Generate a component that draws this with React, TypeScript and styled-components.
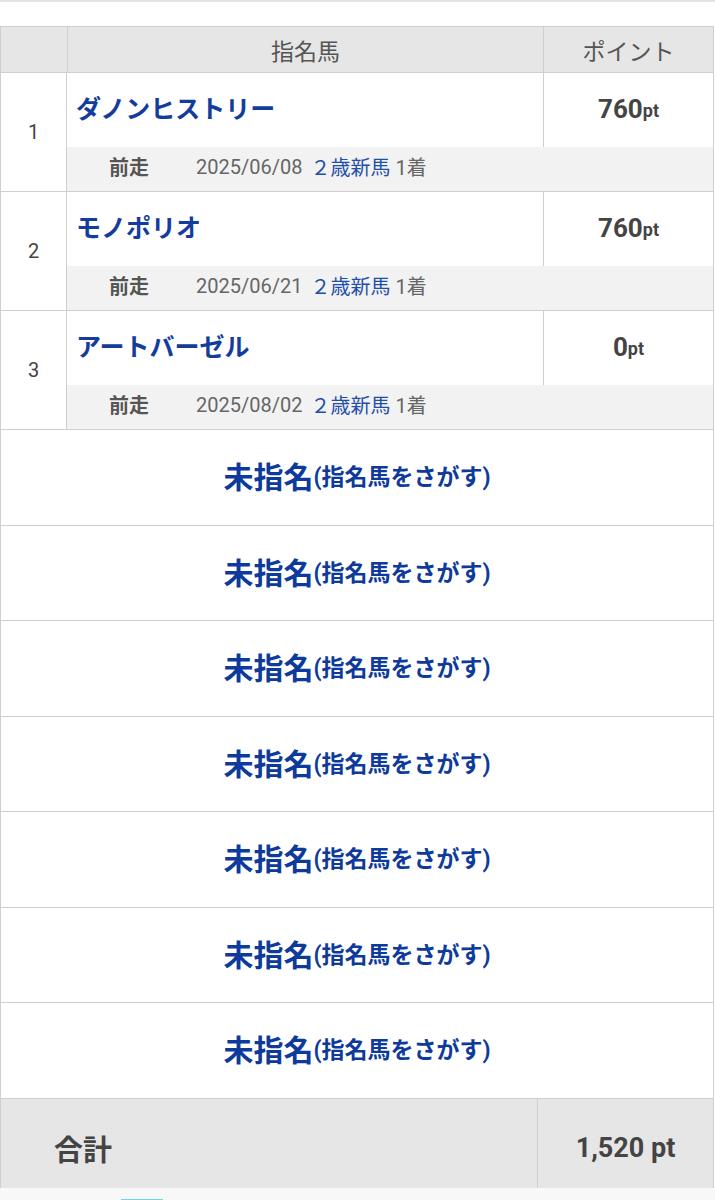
import React from "react";
import styled, { createGlobalStyle } from "styled-components";

const GlobalStyle = createGlobalStyle`
  html, body {
    margin: 0;
    padding: 0;
    background: #ffffff;
  }
  body {
    font-family: Roboto, "Noto Sans CJK JP", "Noto Sans", sans-serif;
    color: #444;
  }
  * { box-sizing: border-box; }
`;

const Page = styled.div`
  width: 715px;
  display: flex;
  flex-direction: column;
`;

const TopLine = styled.div`
  height: 2px;
  background: #e3e3e3;
  margin-bottom: 24px;
`;

const Table = styled.div`
  width: 714px;
  border: 1px solid #cfcfcf;
  border-bottom: none;
  display: flex;
  flex-direction: column;
`;

const HeaderRow = styled.div`
  display: grid;
  grid-template-columns: 66px 476px 1fr;
  height: 46px;
  background: #e6e6e6;
  border-bottom: 1px solid #cfcfcf;
`;

const HeaderCell = styled.div<{ $divider?: boolean }>`
  display: flex;
  align-items: center;
  justify-content: center;
  font-size: 23px;
  color: #555;
  font-weight: 400;
  border-left: ${(p) => (p.$divider ? "1px solid #cfcfcf" : "none")};
`;

const HorseRow = styled.div`
  display: grid;
  grid-template-columns: 66px 476px 1fr;
  grid-template-rows: 74px 44px;
  height: 119px;
  border-bottom: 1px solid #cfcfcf;
`;

const RankCell = styled.div`
  grid-row: 1 / span 2;
  display: flex;
  align-items: center;
  justify-content: center;
  font-size: 20px;
  color: #444;
  border-right: 1px solid #cfcfcf;
`;

const NameCell = styled.div`
  display: flex;
  align-items: center;
  padding-left: 9px;
  padding-bottom: 6px;
  font-size: 25px;
  font-weight: 700;
  color: #133c9c;
`;

const PointCell = styled.div`
  display: flex;
  align-items: center;
  justify-content: center;
  border-left: 1px solid #cfcfcf;
  font-weight: 700;
  color: #444;
  font-size: 26px;
  padding-bottom: 2px;
`;

const PtUnit = styled.span`
  font-size: 18px;
  padding-top: 3px;
`;

const SubCell = styled.div`
  grid-column: 2 / span 2;
  background: #f2f2f2;
  display: flex;
  align-items: center;
  padding-left: 42px;
  font-size: 20px;
  color: #666;
  padding-bottom: 5px;
`;

const SubLabel = styled.span`
  font-weight: 700;
  color: #555;
  margin-right: 47px;
`;

const RaceDate = styled.span`
  color: #666;
  margin-right: 8px;
`;

const RaceLink = styled.span`
  color: #1f4ea8;
  margin-right: 5px;
`;

const EmptyRow = styled.div`
  height: 95.5px;
  display: flex;
  align-items: center;
  justify-content: center;
  border-bottom: 1px solid #cfcfcf;
  background: #fff;
  color: #0d3a9b;
  font-weight: 700;
  padding-bottom: 4px;
`;

const EmptyMain = styled.span`
  font-size: 30px;
`;

const EmptySub = styled.span`
  font-size: 23px;
`;

const FooterRow = styled.div`
  width: 714px;
  display: grid;
  grid-template-columns: 536px 1fr;
  height: 89px;
  background: #e6e6e6;
  border-left: 1px solid #cfcfcf;
  border-right: 1px solid #cfcfcf;
`;

const FooterLabel = styled.div`
  display: flex;
  align-items: center;
  padding-left: 53px;
  font-size: 29px;
  font-weight: 700;
  color: #444;
  padding-top: 10px;
`;

const FooterTotal = styled.div`
  display: flex;
  align-items: center;
  justify-content: center;
  border-left: 1px solid #cfcfcf;
  font-size: 27px;
  font-weight: 700;
  color: #444;
  padding-top: 10px;
`;

const BottomBar = styled.div`
  height: 14px;
  background: #f8f8f8;
  display: flex;
  align-items: flex-end;
  padding-left: 121px;
`;

const BottomTab = styled.div`
  width: 42px;
  height: 3px;
  background: #6fd6ea;
`;

type Horse = { rank: number; name: string; points: string; date: string };

const horses: Horse[] = [
  { rank: 1, name: "ダノンヒストリー", points: "760", date: "2025/06/08" },
  { rank: 2, name: "モノポリオ", points: "760", date: "2025/06/21" },
  { rank: 3, name: "アートバーゼル", points: "0", date: "2025/08/02" },
];

export default function App() {
  return (
    <Page>
      <GlobalStyle />
      <TopLine />
      <Table>
        <HeaderRow>
          <HeaderCell />
          <HeaderCell $divider>指名馬</HeaderCell>
          <HeaderCell $divider>ポイント</HeaderCell>
        </HeaderRow>
        {horses.map((h) => (
          <HorseRow key={h.rank}>
            <RankCell>{h.rank}</RankCell>
            <NameCell>{h.name}</NameCell>
            <PointCell>
              {h.points}
              <PtUnit>pt</PtUnit>
            </PointCell>
            <SubCell>
              <SubLabel>前走</SubLabel>
              <RaceDate>{h.date}</RaceDate>
              <RaceLink>２歳新馬</RaceLink>
              1着
            </SubCell>
          </HorseRow>
        ))}
        {Array.from({ length: 7 }).map((_, i) => (
          <EmptyRow key={i}>
            <EmptyMain>未指名</EmptyMain>
            <EmptySub>(指名馬をさがす)</EmptySub>
          </EmptyRow>
        ))}
      </Table>
      <FooterRow>
        <FooterLabel>合計</FooterLabel>
        <FooterTotal>1,520 pt</FooterTotal>
      </FooterRow>
      <BottomBar>
        <BottomTab />
      </BottomBar>
    </Page>
  );
}
